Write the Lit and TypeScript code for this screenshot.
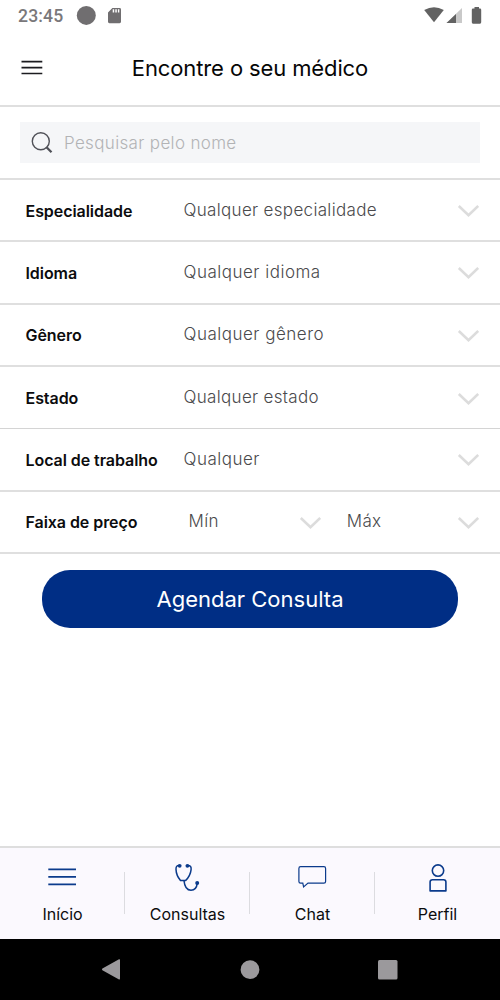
import { LitElement, html, css, svg } from "lit";
import { customElement } from "lit/decorators.js";
import { classMap } from "lit/directives/class-map.js";

const chevron = html`<svg class="chevron" width="22" height="14" viewBox="0 0 22 14">
  <path d="M1.8 2 L11.5 11.2 L21.2 2" fill="none" stroke="#dcdcdc" stroke-width="2.6" />
</svg>`;

const filters = [
  { label: "Especialidade", value: "Qualquer especialidade", thin: false, wide: false },
  { label: "Idioma", value: "Qualquer idioma", thin: false, wide: true },
  { label: "Gênero", value: "Qualquer gênero", thin: false, wide: true },
  { label: "Estado", value: "Qualquer estado", thin: true, wide: false },
  { label: "Local de trabalho", value: "Qualquer", thin: false, wide: true },
];

const tabs = [
  {
    label: "Início",
    icon: svg`<path d="M8.3 14.3H36M8.3 21.8H36M8.3 29.3H36" stroke-width="1.8" />`,
  },
  {
    label: "Consultas",
    icon: svg`<path d="M14.5 10.6C11.6 10.4 10.9 11.6 11 14.4C11.2 19.3 13 22.6 15.5 25.6H20.5C23.5 22.8 25.6 18.9 26.1 14.6C26.4 11.8 25.6 10.5 22.5 10.6" stroke-width="1.5" />
      <path d="M19 25.6C19.5 31 22 35.2 26 35.2C30 35.2 31.8 32.4 32.2 28.4" stroke-width="1.5" />
      <circle cx="14.7" cy="10.8" r="1.9" fill="#0b3b8c" stroke="none" />
      <circle cx="22.4" cy="10.8" r="1.9" fill="#0b3b8c" stroke="none" />
      <circle cx="32.2" cy="28" r="2" fill="#0b3b8c" stroke="none" />`,
  },
  {
    label: "Chat",
    icon: svg`<path d="M10.6 11.7H33.9Q35.6 11.7 35.6 13.4V26.4Q35.6 28.1 33.9 28.1H18L13.6 31.9L12.8 28.1H10.6Q8.9 28.1 8.9 26.4V13.4Q8.9 11.7 10.6 11.7Z" stroke-width="1.2" />`,
  },
  {
    label: "Perfil",
    icon: svg`<circle cx="23" cy="15.6" r="5.7" stroke-width="1.6" />
      <path d="M15.1 35.9V27Q15.1 24.7 17.4 24.7H28.6Q30.9 24.7 30.9 27V35.9Z" stroke-width="1.6" stroke-linejoin="round" />`,
  },
];

@customElement("app-root")
export class AppRoot extends LitElement {
  static styles = css`
    :host {
      display: flex;
      flex-direction: column;
      width: 500px;
      height: 1000px;
      background: #fff;
      color: #0c0c0e;
      font-family: Inter, "Liberation Sans", sans-serif;
      white-space: nowrap;
      overflow: hidden;
    }
    * {
      box-sizing: border-box;
    }
    svg {
      display: block;
      flex: none;
    }
    .status {
      display: flex;
      align-items: center;
      height: 32px;
      padding: 0 17px 0 18px;
      color: #7a787a;
      font: 500 17.6px/32px Roboto, sans-serif;
    }
    .clock {
      width: 58px;
      letter-spacing: 0.15px;
    }
    .spacer {
      flex: 1;
    }
    .header {
      display: flex;
      align-items: center;
      height: 75px;
      padding: 0 21px 2px;
      border-bottom: 2px solid #dfdfdf;
    }
    .title {
      flex: 1;
      margin: 0;
      padding-right: 22px;
      text-align: center;
      font-size: 22px;
      line-height: 30px;
      font-weight: 400;
      letter-spacing: -0.12px;
      color: #060606;
    }
    .search {
      display: flex;
      align-items: center;
      height: 41px;
      margin: 15px 20px;
      padding-left: 11px;
      gap: 11px;
      background: #f5f6f8;
      color: #b2b3b5;
      font-size: 17px;
      font-weight: 300;
      letter-spacing: 0.34px;
    }
    .filters {
      border-top: 2px solid #dfdfdf;
    }
    .row {
      display: flex;
      align-items: center;
      height: 62.33px;
      padding: 2px 21px 0 25.5px;
      border-bottom: 2px solid #dfdfdf;
    }
    .thin {
      border-bottom: 1px solid #d4d4d4;
    }
    .label {
      width: 158px;
      padding-bottom: 1px;
      font-size: 16px;
      font-weight: 600;
      line-height: 24px;
      letter-spacing: -0.06px;
    }
    .value {
      flex: 1;
      padding-bottom: 3px;
      font-size: 17px;
      font-weight: 300;
      line-height: 24px;
      letter-spacing: 0.32px;
      color: #4a4a4c;
    }
    .wide {
      letter-spacing: 0.5px;
    }
    .min {
      padding-left: 5px;
    }
    .max {
      padding-left: 26px;
    }
    .button {
      height: 58px;
      margin: 16.5px 42px 0;
      border: 0;
      border-radius: 28px;
      background: #002e85;
      color: #fff;
      font: 400 22px/59px Inter, sans-serif;
      text-align: center;
      padding: 0;
    }
    .tabs {
      display: grid;
      grid-template-columns: repeat(4, 1fr);
      height: 93px;
      border-top: 2px solid #dedede;
      background: #fbf9fe;
    }
    .tab {
      display: flex;
      flex-direction: column;
      align-items: center;
      padding-top: 7px;
      font-size: 16px;
      line-height: 24px;
      background: linear-gradient(#dcdce0, #dcdce0) right 24px / 1.5px 42px no-repeat;
    }
    .tab:last-child {
      background: none;
    }
    .system {
      height: 61px;
      background: #000;
    }
  `;

  render() {
    return html`
      <div class="status">
        <span class="clock">23:45</span>
        <svg width="50" height="32" viewBox="76 0 50 32" fill="#706e70">
          <circle cx="86.3" cy="15.4" r="9.5" />
          <path fill-rule="evenodd" d="M112.4 8H119.6Q121 8 121 9.4V21.8Q121 23.2 119.6 23.2H109.4Q108 23.2 108 21.8V12.4ZM112.7 9.2V12.4H114.2V9.2ZM115.3 9.2V12.4H116.8V9.2ZM117.9 9.2V12.4H119.3V9.2Z" />
        </svg>
        <span class="spacer"></span>
        <svg width="60" height="32" viewBox="423 0 60 32" fill="#626262">
          <path d="M424.2 10Q434 4.4 443.8 10L434 22.3Z" />
          <path d="M462 8V23H446.5Z" fill="#c9c9c9" />
          <path d="M456 13.9V23H446.5Z" />
          <path d="M474.5 7H479V8.5H480Q481.2 8.5 481.2 9.7V22.3Q481.2 23.7 480 23.7H473Q471.8 23.7 471.8 22.3V9.7Q471.8 8.5 473 8.5H474.5Z" />
        </svg>
      </div>
      <header class="header">
        <svg width="22" height="20" viewBox="0 0 22 20" stroke="#1c1c20" stroke-width="1.6">
          <path d="M.5 3.6H21.3M.5 9.6H21.3M.5 15.5H21.3" />
        </svg>
        <h1 class="title">Encontre o seu médico</h1>
      </header>
      <div class="search">
        <svg width="22" height="22" viewBox="0 0 22 22" fill="none" stroke="#505158">
          <circle cx="9.8" cy="9.2" r="8.5" stroke-width="1.4" />
          <path d="M15.3 15L20.5 20.3" stroke-width="2.3" />
        </svg>
        <span class="placeholder">Pesquisar pelo nome</span>
      </div>
      <section class="filters">
        ${filters.map(
          (f) => html`<div class=${classMap({ row: true, thin: f.thin })}>
            <span class="label">${f.label}</span>
            <span class=${classMap({ value: true, wide: f.wide })}>${f.value}</span>
            ${chevron}
          </div>`
        )}
        <div class="row">
          <span class="label">Faixa de preço</span>
          <span class="value min">Mín</span>
          ${chevron}
          <span class="value max">Máx</span>
          ${chevron}
        </div>
      </section>
      <button class="button">Agendar Consulta</button>
      <div class="spacer"></div>
      <nav class="tabs">
        ${tabs.map(
          (t) => html`<div class="tab">
            <svg width="45" height="47" viewBox="0 0 45 47" fill="none" stroke="#0b3b8c">${t.icon}</svg>
            <span>${t.label}</span>
          </div>`
        )}
      </nav>
      <div class="system">
        <svg width="500" height="61" viewBox="0 0 500 61" fill="#9b999c">
          <path d="M119 20.3Q120 19.9 120 21V39.6Q120 41 119 40.4L102.4 31.2Q101.4 30.4 102.4 29.6Z" />
          <circle cx="250" cy="30.7" r="9.4" />
          <rect x="378" y="21" width="19.5" height="19.5" rx="1.5" />
        </svg>
      </div>
    `;
  }
}
